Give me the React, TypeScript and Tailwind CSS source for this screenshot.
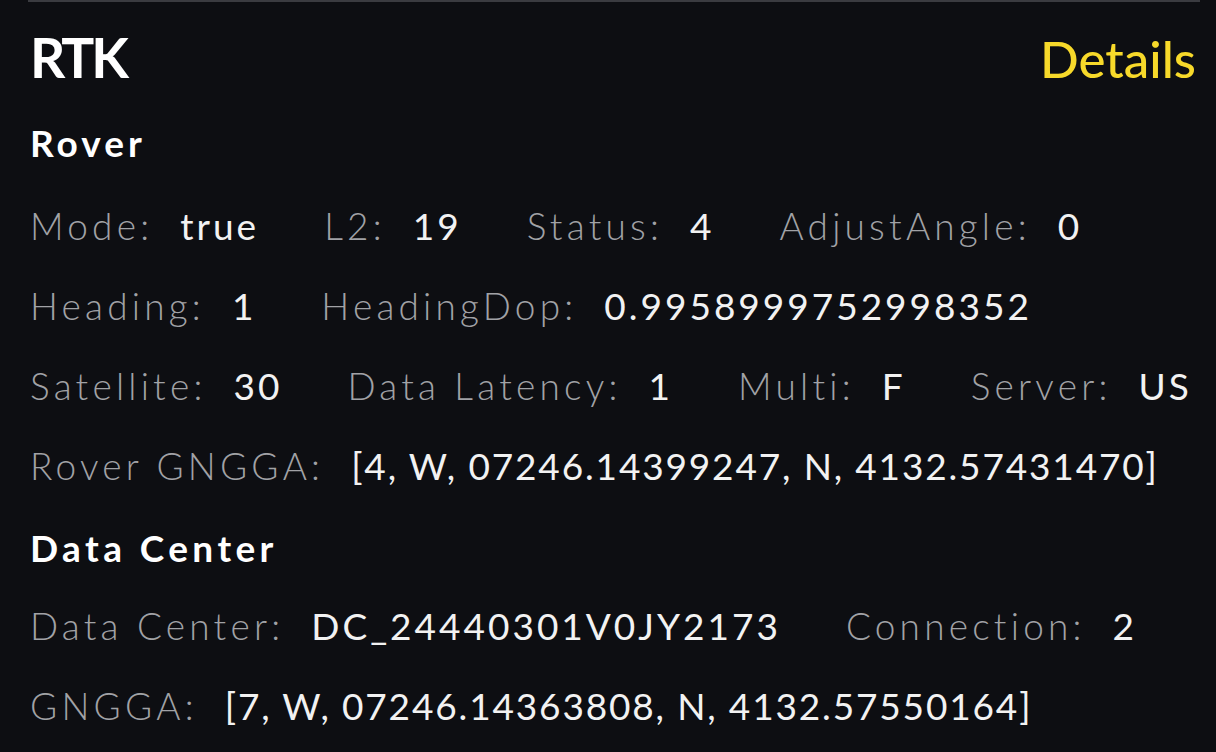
import React from "react";

type Field = { label: string; value: string; tight?: boolean };

const roverRows: Field[][] = [
  [
    { label: "Mode:", value: "true" },
    { label: "L2:", value: "19" },
    { label: "Status:", value: "4" },
    { label: "AdjustAngle:", value: "0" },
  ],
  [
    { label: "Heading:", value: "1" },
    { label: "HeadingDop:", value: "0.9958999752998352" },
  ],
  [
    { label: "Satellite:", value: "30" },
    { label: "Data Latency:", value: "1" },
    { label: "Multi:", value: "F" },
    { label: "Server:", value: "US" },
  ],
  [{ label: "Rover GNGGA:", value: "[4, W, 07246.14399247, N, 4132.57431470]", tight: true }],
];

const centerRows: Field[][] = [
  [
    { label: "Data Center:", value: "DC_24440301V0JY2173" },
    { label: "Connection:", value: "2" },
  ],
  [{ label: "GNGGA:", value: "[7, W, 07246.14363808, N, 4132.57550164]", tight: true }],
];

function FieldRow({ fields }: { fields: Field[] }) {
  return (
    <div className="flex items-baseline gap-x-[65px] h-[80px] leading-[80px] whitespace-nowrap">
      {fields.map((f) => (
        <div key={f.label} className="flex items-baseline gap-[27px]">
          <span className="text-[#a1a2a6] font-light tracking-[4.2px]">{f.label}</span>
          <span
            className={
              f.tight
                ? "text-[#f2f2f2] tracking-[1.85px] tabular-nums"
                : "text-[#f2f2f2] tracking-[3px] tabular-nums"
            }
          >
            {f.value}
          </span>
        </div>
      ))}
    </div>
  );
}

export default function App() {
  return (
    <div
      className="w-[1216px] h-[752px] bg-[#0d0e12] overflow-hidden"
      style={{ fontFamily: "Lato, 'Open Sans', sans-serif" }}
    >
      <div className="ml-[28px] mr-[16px] border-t-2 border-[#3a3b40] pl-[2px] pr-[4px] text-[37px]">
        {/* Header */}
        <div className="flex items-baseline justify-between pt-[8px] h-[104px] leading-[94px]">
          <span className="text-white font-bold text-[55px] tracking-[-3px]">RTK</span>
          <span className="text-[#f7d92a] font-medium text-[51px]">Details</span>
        </div>

        {/* Rover */}
        <div className="h-[80px] leading-[74px] text-white font-bold tracking-[4px]">Rover</div>
        {roverRows.map((r, i) => (
          <FieldRow key={i} fields={r} />
        ))}

        {/* Data center */}
        <div className="h-[80px] leading-[84px] text-white font-bold tracking-[4.4px]">Data Center</div>
        {centerRows.map((r, i) => (
          <FieldRow key={i} fields={r} />
        ))}
      </div>
    </div>
  );
}
